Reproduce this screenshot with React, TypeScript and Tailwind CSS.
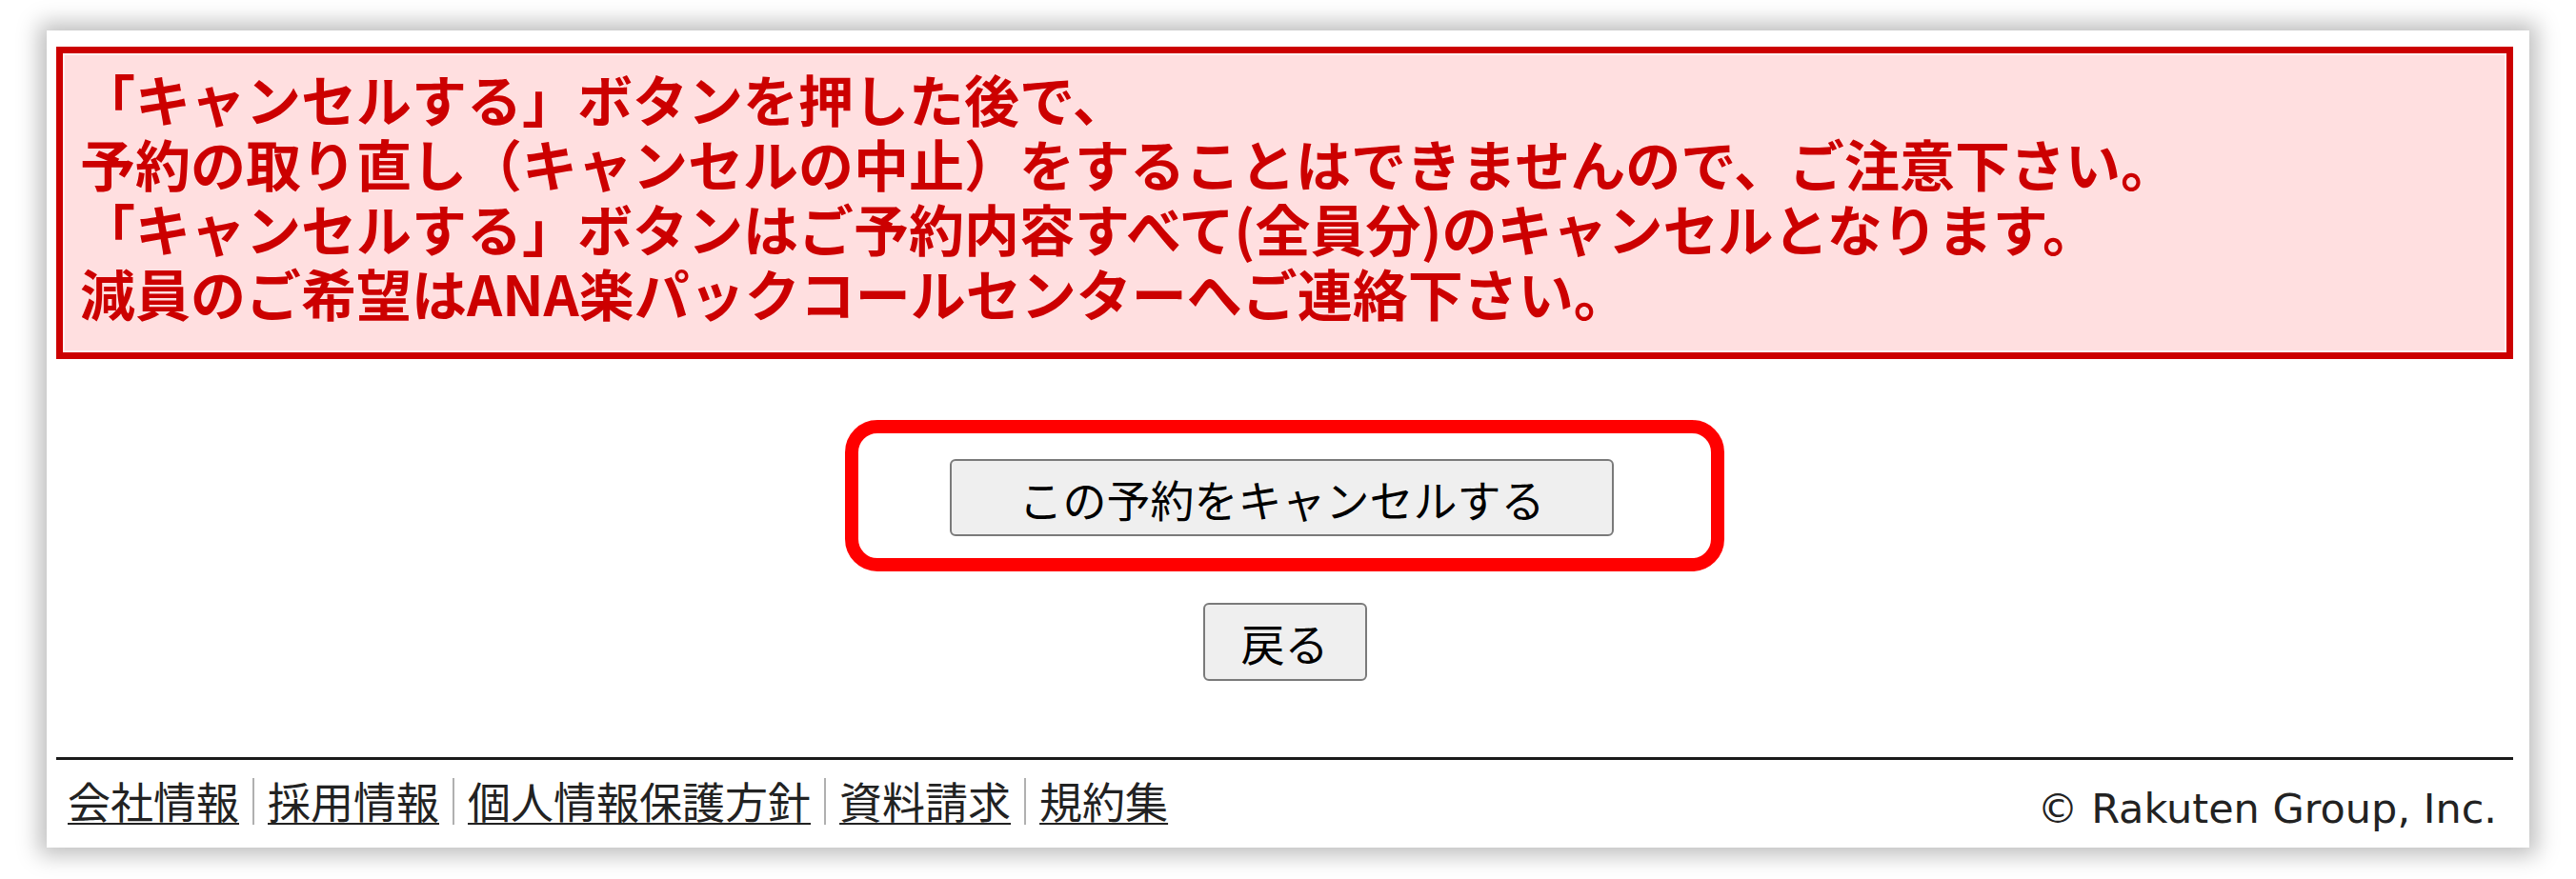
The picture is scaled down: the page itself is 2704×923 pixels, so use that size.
import React from "react";

const jp = { fontFamily: '"Noto Sans CJK JP", "Noto Sans", sans-serif' };

function Sep() {
  return <span className="mx-[14px] inline-block w-[2px] h-[49px] bg-[#b0b0b0]" />;
}

export default function App() {
  const links = ["会社情報", "採用情報", "個人情報保護方針", "資料請求", "規約集"];
  return (
    <div className="w-[2704px] h-[923px] bg-white overflow-hidden pt-[32px] pl-[49px]" style={jp}>
      <div className="w-[2606px] h-[858px] bg-white shadow-[0_0_22px_8px_rgba(0,0,0,0.26)] pl-[10px] pr-[17px] pt-[17px] flex flex-col">
        <div className="h-[328px] border-[7px] border-[#cc0000] bg-[#ffdfe0] shadow-[inset_0_0_0_2px_#fff2f2] pl-[18px] pt-[13px] text-[58px] leading-[68px] font-bold text-[#cc0000] whitespace-nowrap">
          <p>「キャンセルする」ボタンを押した後で、</p>
          <p>予約の取り直し（キャンセルの中止）をすることはできませんので、ご注意下さい。</p>
          <p>「キャンセルする」ボタンはご予約内容すべて(全員分)のキャンセルとなります。</p>
          <p>減員のご希望はANA楽パックコールセンターへご連絡下さい。</p>
        </div>

        <div className="mt-[64px] flex flex-col items-center">
          <div className="border-[14px] border-[#ff0000] rounded-[34px] pt-[27px] pb-[23px] pl-[96px] pr-[102px]">
            <button className="w-[697px] h-[81px] bg-[#efefef] border-[2px] border-[#7a7a7a] rounded-[6px] text-[46px] leading-none text-black flex items-center justify-center">
              この予約をキャンセルする
            </button>
          </div>
          <button className="mt-[33px] w-[172px] h-[82px] bg-[#efefef] border-[2px] border-[#7a7a7a] rounded-[6px] text-[46px] leading-none text-black flex items-center justify-center">
            戻る
          </button>
        </div>

        <div className="mt-[80px] h-[3px] bg-[#1a1a1a]" />

        <div className="flex justify-between items-end pt-[20px] pl-[12px] pr-[17px]">
          <div className="flex items-center h-[46px] text-[45px] leading-[46px] text-[#222]">
            {links.map((l, i) => (
              <React.Fragment key={l}>
                {i > 0 && <Sep />}
                <a className="underline decoration-[2px] underline-offset-[4px] cursor-pointer">{l}</a>
              </React.Fragment>
            ))}
          </div>
          <div
            className="text-[43px] leading-[43px] text-[#222] mb-[-7px]"
            style={{ fontFamily: '"DejaVu Sans", Verdana, sans-serif' }}
          >
            © Rakuten Group, Inc.
          </div>
        </div>
      </div>
    </div>
  );
}
